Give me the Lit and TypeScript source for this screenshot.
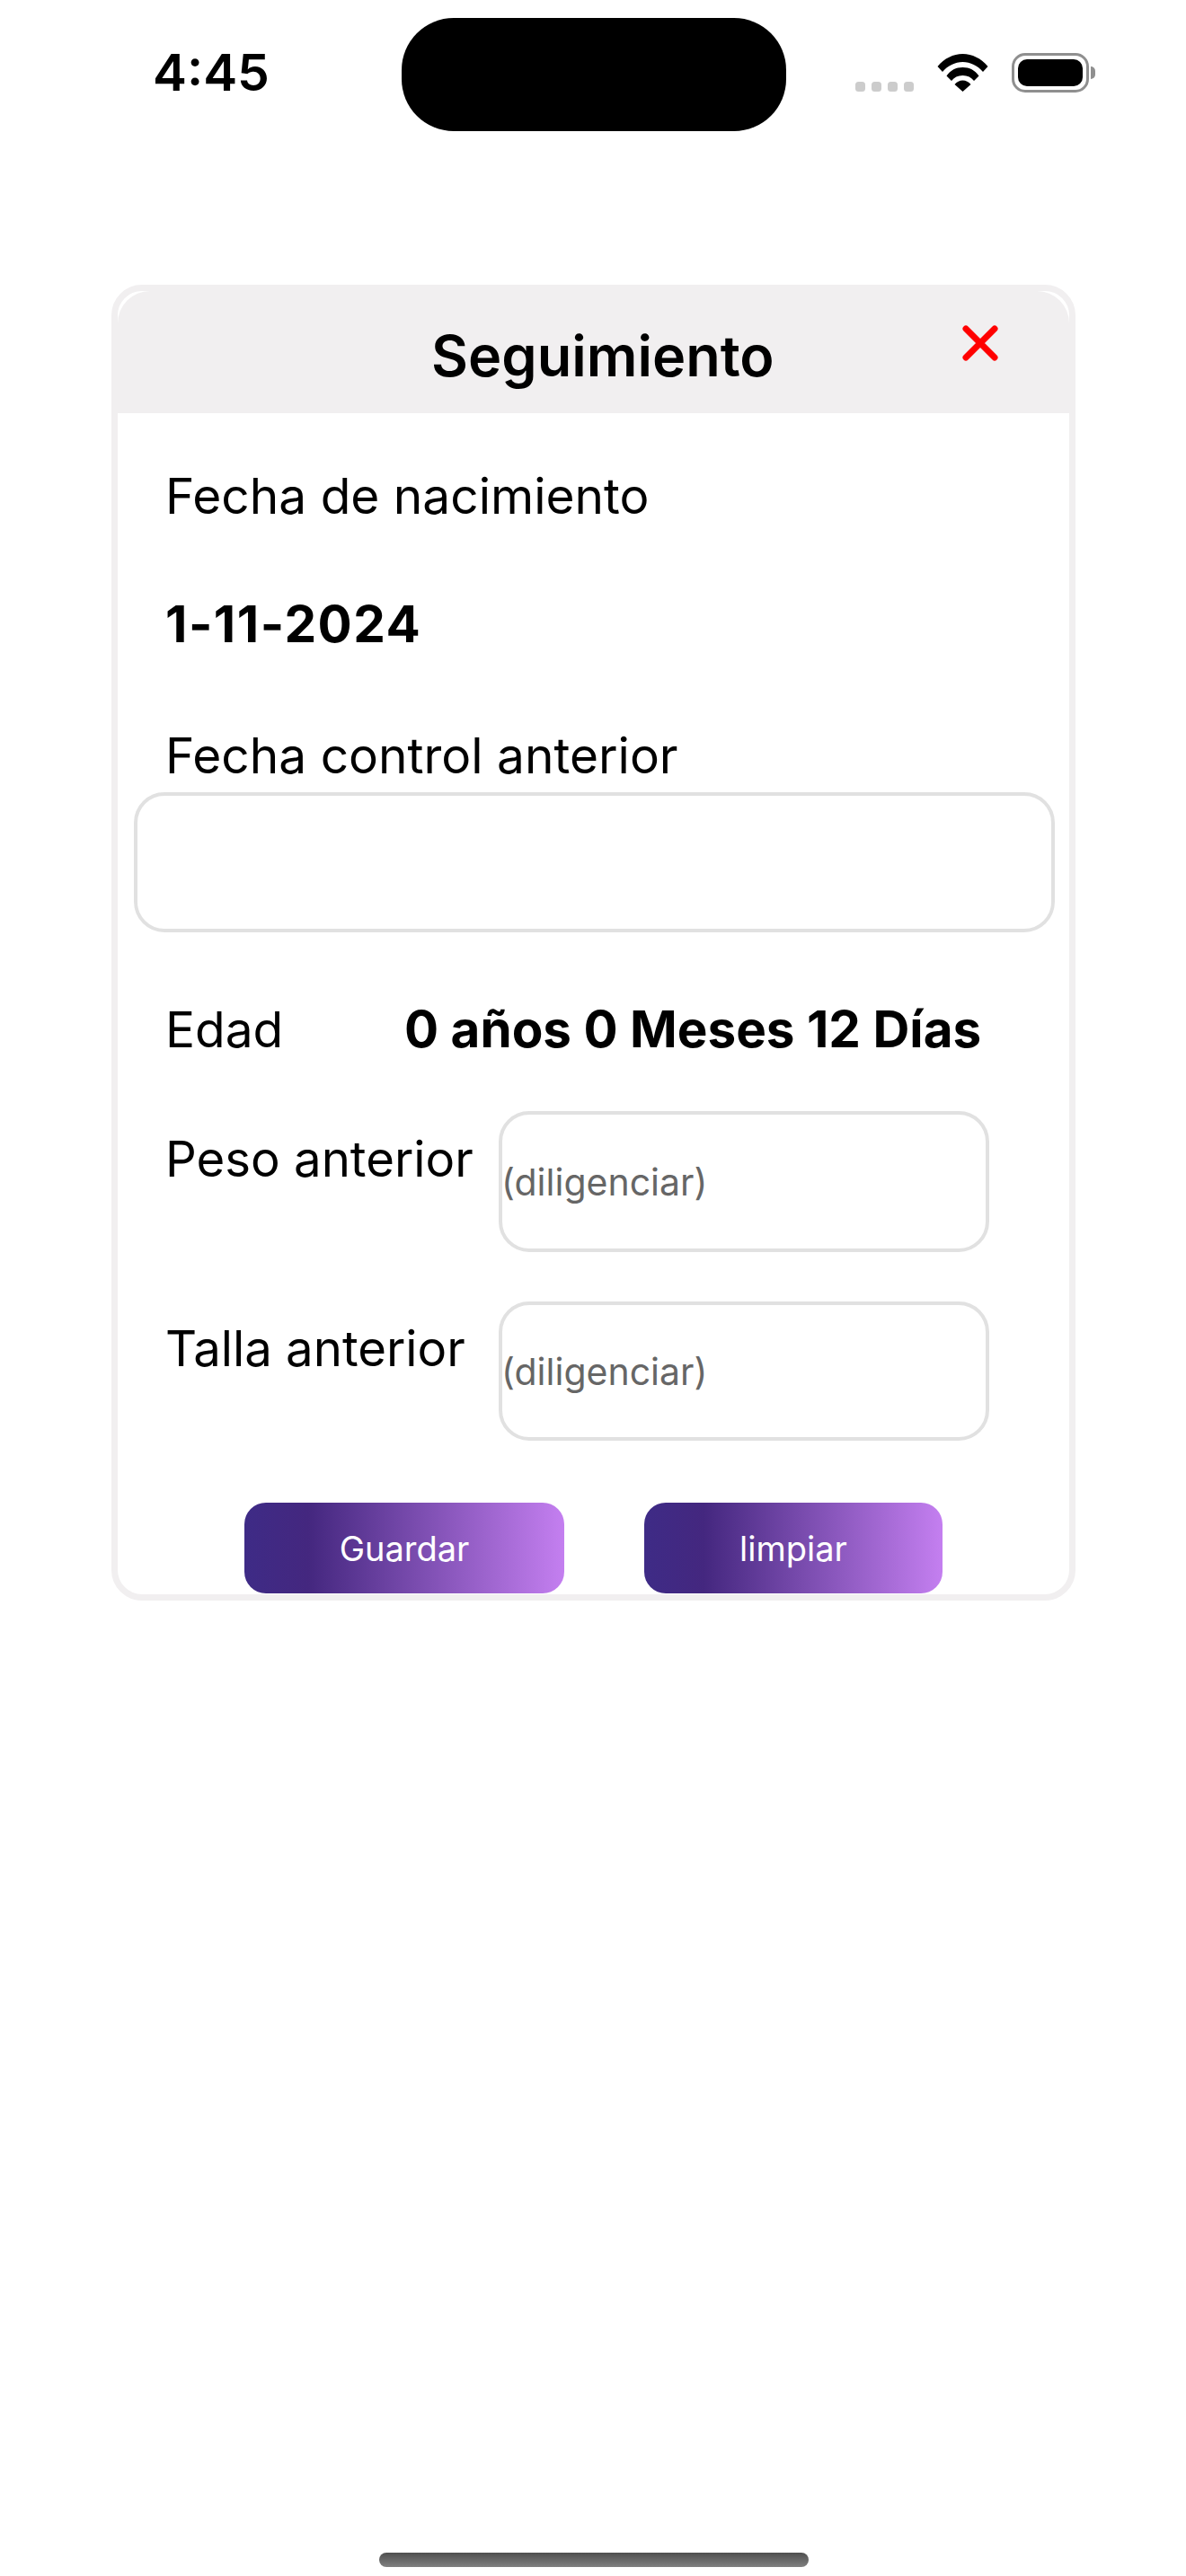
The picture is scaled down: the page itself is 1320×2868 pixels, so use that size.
import { LitElement, html, css } from "lit";
import { customElement } from "lit/decorators.js";

@customElement("app-root")
export class AppRoot extends LitElement {
  static styles = css`
    :host {
      display: flex;
      flex-direction: column;
      width: 1320px;
      height: 2868px;
      background: #fff;
      font-family: Inter, "Liberation Sans", sans-serif;
      color: #000;
      overflow: hidden;
    }
    .status {
      display: flex;
      align-items: flex-start;
      height: 146px;
      padding-top: 20px;
      box-sizing: content-box;
      flex: none;
    }
    .time {
      width: 277px;
      padding-left: 170px;
      box-sizing: content-box;
      font-size: 57px;
      font-weight: 600;
      line-height: 122px;
      height: 122px;
    }
    .island {
      width: 428px;
      height: 126px;
      background: #000;
      border-radius: 58px;
      flex: none;
    }
    .icons {
      display: flex;
      align-items: flex-start;
      margin-left: 77px;
      padding-top: 39px;
    }
    .dots {
      display: flex;
      gap: 7px;
      margin-top: 32px;
      width: 65px;
    }
    .dots i {
      width: 11px;
      height: 11px;
      border-radius: 3.5px;
      background: #ccc;
    }
    .wifi {
      display: block;
      width: 57px;
      height: 42px;
      margin-left: 26px;
      margin-top: 1px;
    }
    .battery {
      width: 86px;
      height: 44px;
      margin-left: 26px;
      box-sizing: border-box;
      border: 3px solid #8f8f8f;
      border-radius: 15px;
      padding: 4px;
    }
    .battery b {
      display: block;
      width: 100%;
      height: 100%;
      background: #000;
      border-radius: 10px;
    }
    .nub {
      width: 5px;
      height: 14px;
      margin-left: 2px;
      margin-top: 15px;
      background: #8f8f8f;
      border-radius: 0 7px 7px 0;
    }
    .card {
      width: 1073px;
      margin: 151px 0 0 124px;
      box-sizing: border-box;
      border: 7px solid #f1eff0;
      border-radius: 34px;
      background: #fff;
      flex: none;
    }
    .head {
      height: 136px;
      display: flex;
      align-items: flex-start;
      background: #f1eff0;
      border-radius: 36px 36px 0 0;
      padding-left: 349px;
    }
    h1 {
      margin: 36px 0 0;
      font-size: 63px;
      font-weight: 600;
      line-height: 72px;
    }
    .close {
      display: block;
      width: 40px;
      height: 40px;
      margin-left: auto;
      margin-right: 79px;
      margin-top: 38px;
      flex: none;
    }
    .line {
      margin: 0 0 0 53px;
      font-size: 55px;
      line-height: 70px;
      font-weight: 400;
    }
    .strong {
      font-weight: 700;
      font-size: 56.6px;
    }
    .first { margin-top: 57px; }
    .dob { margin-top: 73px; letter-spacing: 1.5px; }
    .prev { margin-top: 76px; }
    input {
      display: block;
      box-sizing: border-box;
      border: 4px solid #e1e1e1;
      border-radius: 34px;
      background: #fff;
      outline: none;
      padding: 0;
      font-family: inherit;
      font-size: 41px;
      color: #000;
      text-indent: -1px;
    }
    input::placeholder { color: #666; opacity: 1; }
    .date {
      width: 1025px;
      height: 156px;
      margin: 6px 0 0 18px;
    }
    .age {
      display: flex;
      margin: 73px 0 0 53px;
      font-size: 55px;
      line-height: 70px;
    }
    .age span:first-child { width: 266px; }
    .row {
      display: flex;
      align-items: flex-start;
      margin-left: 53px;
      font-size: 54.5px;
      line-height: 70px;
    }
    .row span { width: 371px; flex: none; padding-top: 18px; }
    .row.tall { margin-top: 56px; }
    .row.short { margin-top: 55px; }
    .row span.t { padding-top: 17px; }
    .row input {
      width: 546px;
      height: 157px;
    }
    .row.short input { height: 155px; }
    .actions {
      display: flex;
      margin: 69px 0 0 141px;
      padding-bottom: 1px;
      gap: 89px;
    }
    button {
      border: 0;
      height: 101px;
      border-radius: 24px;
      color: #fff;
      font-family: inherit;
      font-size: 38px;
      font-weight: 400;
      padding: 0;
      background: linear-gradient(90deg, #3e2b86 0%, #44277f 20%, #c47ff0 100%);
    }
    .save { width: 356px; }
    .clear { width: 332px; }
    .home {
      width: 478px;
      height: 16px;
      margin: auto 0 10px 422px;
      border-radius: 8px;
      background: linear-gradient(180deg, #4f4f4f, #808080);
      flex: none;
    }
  `;

  render() {
    return html`
      <div class="status">
        <div class="time">4:45</div>
        <div class="island"></div>
        <div class="icons">
          <div class="dots"><i></i><i></i><i></i><i></i></div>
          <svg class="wifi" viewBox="0 0 57 42" aria-hidden="true">
            <path d="M0.5 14 C8 5 18 0 28.5 0 C39 0 49 5 56.5 14 L51 20 C45 13 37 9 28.5 9 C20 9 12 13 6 20 Z" fill="#000"/>
            <path d="M10.5 24.5 C15 18 21 15 28.5 15 C36 15 42 18 46.5 24.5 L41 30 C38 26 34 24 28.5 24 C23 24 19 26 16 30 Z" fill="#000"/>
            <path d="M19.5 34 C22 31 25 29.5 28.5 29.5 C32 29.5 35 31 37.5 34 L28.5 42 Z" fill="#000"/>
          </svg>
          <div class="battery"><b></b></div>
          <div class="nub"></div>
        </div>
      </div>
      <section class="card">
        <header class="head">
          <h1>Seguimiento</h1>
          <svg class="close" viewBox="0 0 40 40" aria-hidden="true">
            <path d="M4 4 L36 36 M36 4 L4 36" stroke="#f00" stroke-width="7" stroke-linecap="round"/>
          </svg>
        </header>
        <p class="line first">Fecha de nacimiento</p>
        <p class="line strong dob">1-11-2024</p>
        <p class="line prev">Fecha control anterior</p>
        <input class="date" type="text" />
        <div class="age"><span>Edad</span><span class="strong">0 años 0 Meses 12 Días</span></div>
        <div class="row tall"><span>Peso anterior</span><input type="text" placeholder="(diligenciar)" /></div>
        <div class="row short"><span class="t">Talla anterior</span><input type="text" placeholder="(diligenciar)" /></div>
        <div class="actions">
          <button class="save">Guardar</button>
          <button class="clear">limpiar</button>
        </div>
      </section>
      <div class="home"></div>
    `;
  }
}
